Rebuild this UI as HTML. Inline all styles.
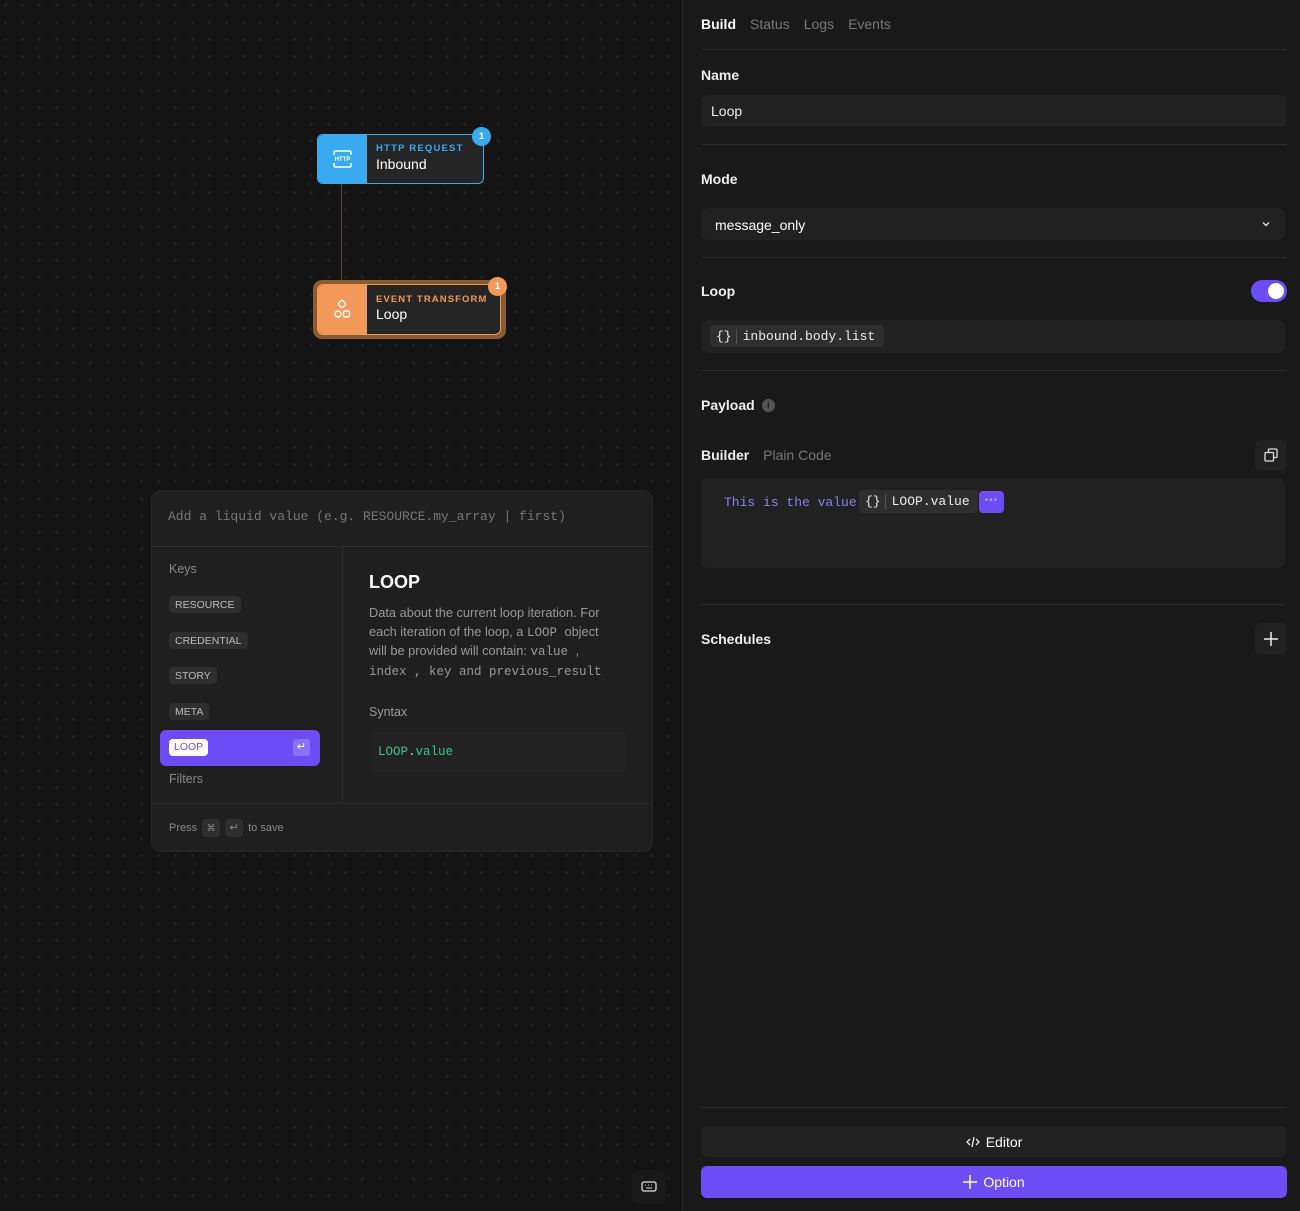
<!DOCTYPE html>
<html><head><meta charset="utf-8"><style>
*{box-sizing:border-box;margin:0;padding:0}
body{width:1300px;height:1211px;overflow:hidden;background:#151515;font-family:"Liberation Sans",sans-serif;position:relative;color:#eee}
.canvas{position:absolute;left:0;top:0;width:682px;height:1211px;background-color:#141414;background-image:radial-gradient(circle,#2c2c2c 1px,transparent 1.3px);background-size:17px 17px;background-position:-3px -3px}
.abs{position:absolute}
.panel{position:absolute;left:682px;top:0;width:618px;height:1211px;background:#191919;border-left:1px solid #2a2a2a}
.sep{position:absolute;left:19px;right:13px;height:1px;background:#2c2c2c}
.lbl{position:absolute;left:19px;font-size:14px;font-weight:bold;color:#eee}
.box{position:absolute;left:19px;right:13px;background:#212121;border-radius:7px}
.mono{font-family:"Liberation Mono",monospace}
.chip{display:inline-flex;align-items:center;background:#2e2e2e;border-radius:4px;font-size:10.5px;color:#bbb;padding:0 6px;height:17px}
</style></head><body>
<div class="canvas"></div>
<div class="abs" style="left:341px;top:183px;width:1px;height:99px;background:#5a4a3a"></div>
<div class="abs" style="left:317px;top:134px;width:167px;height:50px;border:1px solid #3aaaf0;border-radius:6px;background:#252525;overflow:hidden">
 <div class="abs" style="left:0;top:0;width:49px;height:48px;background:#3aaaf0"></div>
 <svg class="abs" style="left:14px;top:14px" width="21" height="20" viewBox="0 0 21 20" fill="none" stroke="#fff" stroke-width="1.5"><path d="M2 6V3.5Q2 2 3.5 2h14Q19 2 19 3.5V6M2 14v2.5Q2 18 3.5 18h14q1.5 0 1.5-1.5V14"/><text x="10.5" y="12" font-size="6" font-weight="bold" fill="#fff" stroke="none" text-anchor="middle" font-family="Liberation Sans">HTTP</text></svg>
 <div class="abs" style="left:58px;top:8px;font-size:9.5px;font-weight:bold;letter-spacing:1.2px;color:#3aaaf0">HTTP REQUEST</div>
 <div class="abs" style="left:58px;top:21px;font-size:14px;color:#fff">Inbound</div>
</div>
<div class="abs" style="left:472px;top:127px;width:19px;height:19px;border-radius:50%;background:#3aaaf0;color:#fff;font-size:9px;font-weight:bold;text-align:center;line-height:19px">1</div>
<div class="abs" style="left:313px;top:280px;width:193px;height:59px;border-radius:9px;background:#8a5a30"></div>
<div class="abs" style="left:317px;top:284px;width:184px;height:51px;border-radius:6px;background:#252525;overflow:hidden;border:1px solid #f09a50">
 <div class="abs" style="left:0;top:0;width:49px;height:50px;background:#f2995a"></div>
 <svg class="abs" style="left:14px;top:14px" width="21" height="21" viewBox="0 0 21 21" fill="none" stroke="#fff" stroke-width="1.4"><rect x="7" y="2" width="6" height="6" rx="1.5" transform="rotate(45 10 5)"/><circle cx="6" cy="15" r="3"/><rect x="11.5" y="12" width="6" height="6" rx="1.5"/></svg>
 <div class="abs" style="left:58px;top:9px;font-size:9.5px;font-weight:bold;letter-spacing:1.1px;color:#f2995a">EVENT TRANSFORM</div>
 <div class="abs" style="left:58px;top:21px;font-size:14px;color:#fff">Loop</div>
</div>
<div class="abs" style="left:488px;top:277px;width:19px;height:19px;border-radius:50%;background:#f2995a;color:#fff;font-size:9px;font-weight:bold;text-align:center;line-height:19px">1</div>

<div class="abs" style="left:151px;top:490px;width:502px;height:362px;background:#1f1f1f;border-radius:10px;border:1px solid #262626;overflow:hidden">
 <div class="abs mono" style="left:16px;top:18px;font-size:13px;color:#777;white-space:nowrap">Add a liquid value (e.g. RESOURCE.my_array | first)</div>
 <div class="abs" style="left:0;right:0;top:55px;height:1px;background:#2c2c2c"></div>
 <div class="abs" style="left:190px;top:55px;width:1px;height:257px;background:#2c2c2c"></div>
 <div class="abs" style="left:0;right:0;top:312px;height:1px;background:#2c2c2c"></div>
 <div class="abs" style="left:17px;top:71px;font-size:12.5px;color:#888">Keys</div>
 <div class="abs chip" style="left:17px;top:105px">RESOURCE</div>
 <div class="abs chip" style="left:17px;top:141px">CREDENTIAL</div>
 <div class="abs chip" style="left:17px;top:176px">STORY</div>
 <div class="abs chip" style="left:17px;top:212px">META</div>
 <div class="abs" style="left:8px;top:239px;width:160px;height:36px;background:#6b4cf5;border-radius:6px">
  <div class="abs" style="left:9px;top:9px;height:17px;padding:0 5px;background:#fff;border-radius:4px;color:#6b4cf5;font-size:10.5px;line-height:17px">LOOP</div>
  <div class="abs" style="left:133px;top:9px;width:17px;height:17px;background:#8a72f7;border-radius:3px;color:#fff;font-size:11px;text-align:center;line-height:17px">↵</div>
 </div>
 <div class="abs" style="left:17px;top:281px;font-size:12.5px;color:#888">Filters</div>
 <div class="abs" style="left:217px;top:81px;font-size:18px;font-weight:bold;color:#fff">LOOP</div>
 <div class="abs" style="left:217px;top:113px;width:248px;font-size:12.8px;line-height:18.5px;color:#999">Data about the current loop iteration. For each iteration of the loop, a <span class="mono" style="font-size:12.5px"> LOOP </span> object will be provided will contain: <span class="mono" style="font-size:12.5px"> value </span>,<br><span class="mono" style="font-size:12.5px"> index , key and previous_result</span></div>
 <div class="abs" style="left:217px;top:214px;font-size:12.5px;color:#999">Syntax</div>
 <div class="abs" style="left:217px;top:241px;width:258px;height:40px;background:#222;border-radius:5px"></div>
 <div class="abs mono" style="left:226px;top:254px;font-size:12.5px;color:#3cc88c">LOOP<span style="color:#ccc">.</span>value</div>
 <div class="abs" style="left:17px;top:328px;font-size:11px;color:#888;display:flex;align-items:center;gap:5px">Press <span style="display:inline-block;width:18px;height:18px;background:#2e2e2e;border-radius:4px;text-align:center;line-height:18px;font-size:9px">⌘</span><span style="display:inline-block;width:18px;height:18px;background:#2e2e2e;border-radius:4px;text-align:center;line-height:18px">↵</span>to save</div>
</div>
<div class="abs" style="left:632px;top:1170px;width:34px;height:34px;background:#191919;border-radius:6px"></div>
<svg class="abs" style="left:641px;top:1181px" width="16" height="11" viewBox="0 0 16 11" fill="none" stroke="#ddd" stroke-width="1.3"><rect x="1" y="1" width="14" height="9" rx="2"/><path d="M4 4h1M7 4h1M10 4h1M5 7h6" stroke-width="1.1"/></svg>

<div class="panel">
 <div class="abs" style="left:18px;top:16px;font-size:14px;display:flex;gap:14px"><span style="color:#fff;font-weight:bold">Build</span><span style="color:#777">Status</span><span style="color:#777">Logs</span><span style="color:#777">Events</span></div>
 <div class="sep" style="top:49px"></div>
 <div class="lbl" style="left:18px;top:67px">Name</div>
 <div class="box" style="left:18px;top:95px;height:32px"><div class="abs" style="left:10px;top:8px;font-size:14px;color:#eee">Loop</div></div>
 <div class="sep" style="top:144px"></div>
 <div class="lbl" style="left:18px;top:171px">Mode</div>
 <div class="box" style="left:18px;top:208px;height:32px;right:15px"><div class="abs" style="left:14px;top:9px;font-size:14px;color:#fff">message_only</div>
  <svg class="abs" style="right:15px;top:13px" width="8" height="6" viewBox="0 0 8 6" fill="none" stroke="#ddd" stroke-width="1.4"><path d="M1 1.5l3 3 3-3"/></svg></div>
 <div class="sep" style="top:257px"></div>
 <div class="lbl" style="left:18px;top:283px">Loop</div>
 <div class="abs" style="left:568px;top:280px;width:36px;height:22px;border-radius:11px;background:#6b4cf5"><div class="abs" style="left:17px;top:3px;width:16px;height:16px;border-radius:50%;background:#fff"></div></div>
 <div class="box" style="left:18px;top:320px;height:33px;right:15px">
  <div class="abs mono" style="left:9px;top:5px;height:22px;background:#2e2e2e;border-radius:4px;display:flex;align-items:center;font-size:13px;color:#eee;padding:0 9px 0 6px"><span style="padding-right:4px;border-right:1px solid #555;margin-right:6px">{}</span>inbound.body.list</div>
 </div>
 <div class="sep" style="top:370px"></div>
 <div class="lbl" style="left:18px;top:397px;display:flex;align-items:center">Payload <span style="display:inline-block;width:13px;height:13px;border-radius:50%;background:#555;color:#1a1a1a;font-size:9px;text-align:center;line-height:13px;margin-left:7px">i</span></div>
 <div class="lbl" style="left:18px;top:447px">Builder <span style="color:#777;font-weight:normal;margin-left:10px">Plain Code</span></div>
 <div class="abs" style="left:572px;top:440px;width:32px;height:31px;background:#212121;border-radius:6px"></div>
 <svg class="abs" style="left:581px;top:448px" width="14" height="14" viewBox="0 0 14 14" fill="none" stroke="#ddd" stroke-width="1.3"><rect x="1" y="4.5" width="8.5" height="8.5" rx="1"/><path d="M4.5 4.5V2Q4.5 1 5.5 1H12q1 0 1 1v6.5q0 1-1 1H9.5"/></svg>
 <div class="box" style="left:18px;top:478px;height:90px;right:15px">
  <div class="abs mono" style="left:23px;top:17px;font-size:13px;color:#8b80f0">This is the value</div>
  <div class="abs mono" style="left:158px;top:12px;height:23px;background:#2e2e2e;border-radius:4px;display:flex;align-items:center;font-size:13px;color:#eee;padding:0 8px 0 6px"><span style="padding-right:4px;border-right:1px solid #555;margin-right:6px">{}</span>LOOP.value</div>
  <div class="abs" style="left:278px;top:13px;width:25px;height:22px;background:#6b4cf5;border-radius:4px;color:#b0a0ff;font-size:10px;text-align:center;line-height:20px;letter-spacing:1px">•••</div>
 </div>
 <div class="sep" style="top:604px;right:15px"></div>
 <div class="lbl" style="left:18px;top:631px">Schedules</div>
 <div class="abs" style="left:572px;top:623px;width:32px;height:32px;background:#212121;border-radius:6px"></div>
 <svg class="abs" style="left:581px;top:632px" width="14" height="14" viewBox="0 0 14 14" stroke="#eee" stroke-width="1.5"><path d="M7 0v14M0 7h14"/></svg>
 <div class="sep" style="top:1107px;right:13px"></div>
 <div class="box" style="left:18px;top:1126px;height:31px;right:13px;display:flex;align-items:center;justify-content:center;gap:6px;font-size:14px;color:#fff">
  <svg width="14" height="12" viewBox="0 0 14 12" fill="none" stroke="#eee" stroke-width="1.3"><path d="M4 3L1 6l3 3M10 3l3 3-3 3M8 1L6 11"/></svg>Editor</div>
 <div class="abs" style="left:18px;right:13px;top:1166px;height:32px;background:#6b4cf5;border-radius:6px;display:flex;align-items:center;justify-content:center;gap:6px;font-size:14px;color:#fff">
  <svg width="14" height="14" viewBox="0 0 14 14" stroke="#fff" stroke-width="1.5"><path d="M7 0v14M0 7h14"/></svg>Option</div>
</div>
</body></html>
